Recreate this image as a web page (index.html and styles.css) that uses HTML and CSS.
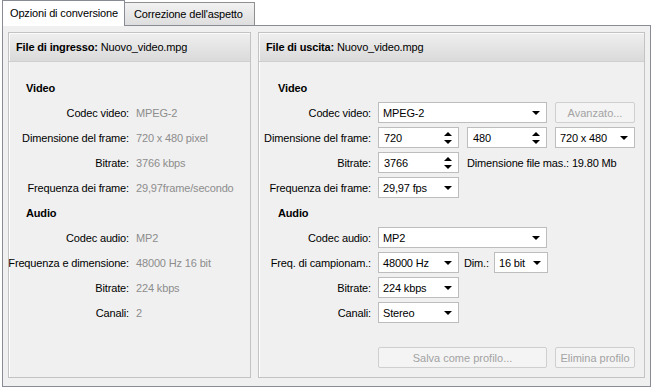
FILE: index.html
```html
<!DOCTYPE html>
<html lang="it">
<head>
<meta charset="utf-8">
<title>Opzioni di conversione</title>
<link rel="stylesheet" href="styles.css">
</head>
<body>
<div class="window">
  <div class="tabs">
    <div class="tab active">Opzioni di conversione</div>
    <div class="tab">Correzione dell'aspetto</div>
  </div>
  <div class="pane">
    <section class="group group-in">
      <header class="group-head"><b>File di ingresso:</b> Nuovo_video.mpg</header>
      <div class="info-grid">
        <div class="section">Video</div>
        <span class="lbl">Codec video:</span><span class="val">MPEG-2</span>
        <span class="lbl">Dimensione del frame:</span><span class="val">720 x 480 pixel</span>
        <span class="lbl">Bitrate:</span><span class="val">3766 kbps</span>
        <span class="lbl">Frequenza dei frame:</span><span class="val">29,97frame/secondo</span>
        <div class="section">Audio</div>
        <span class="lbl">Codec audio:</span><span class="val">MP2</span>
        <span class="lbl">Frequenza e dimensione:</span><span class="val">48000 Hz 16 bit</span>
        <span class="lbl">Bitrate:</span><span class="val">224 kbps</span>
        <span class="lbl">Canali:</span><span class="val">2</span>
      </div>
    </section>
    <section class="group group-out">
      <header class="group-head"><b>File di uscita:</b> Nuovo_video.mpg</header>
      <div class="form">
        <div class="section">Video</div>
        <div class="row">
          <span class="flbl">Codec video:</span>
          <div class="combo w-wide"><span>MPEG-2</span><i class="arrow"></i></div>
          <button class="btn w-std" disabled>Avanzato...</button>
        </div>
        <div class="row">
          <span class="flbl">Dimensione del frame:</span>
          <div class="spin w-std1"><span>720</span><i class="spin-arrows"><b class="up"></b><b class="down"></b></i></div>
          <div class="spin w-std"><span>480</span><i class="spin-arrows"><b class="up"></b><b class="down"></b></i></div>
          <div class="combo w-std"><span>720 x 480</span><i class="arrow"></i></div>
        </div>
        <div class="row">
          <span class="flbl">Bitrate:</span>
          <div class="spin w-std1"><span>3766</span><i class="spin-arrows"><b class="up"></b><b class="down"></b></i></div>
          <span class="note">Dimensione file mas.: 19.80 Mb</span>
        </div>
        <div class="row">
          <span class="flbl">Frequenza dei frame:</span>
          <div class="combo w-std1"><span>29,97 fps</span><i class="arrow"></i></div>
        </div>
        <div class="section">Audio</div>
        <div class="row">
          <span class="flbl">Codec audio:</span>
          <div class="combo w-wide"><span>MP2</span><i class="arrow"></i></div>
        </div>
        <div class="row">
          <span class="flbl">Freq. di campionam.:</span>
          <div class="combo w-std1"><span>48000 Hz</span><i class="arrow"></i></div>
          <span class="dim">Dim.:</span>
          <div class="combo w-small"><span>16 bit</span><i class="arrow"></i></div>
        </div>
        <div class="row">
          <span class="flbl">Bitrate:</span>
          <div class="combo w-std1"><span>224 kbps</span><i class="arrow"></i></div>
        </div>
        <div class="row">
          <span class="flbl">Canali:</span>
          <div class="combo w-std1"><span>Stereo</span><i class="arrow"></i></div>
        </div>
        <div class="buttons">
          <button class="btn w-wide" disabled>Salva come profilo...</button>
          <button class="btn w-std" disabled>Elimina profilo</button>
        </div>
      </div>
    </section>
  </div>
</div>
</body>
</html>
```

FILE: styles.css
```css
* { box-sizing: border-box; }

html, body {
  margin: 0;
  padding: 0;
  background: #ffffff;
}

body {
  font-family: "Liberation Sans", Arial, sans-serif;
  font-size: 11px;
  letter-spacing: -0.15px;
  color: #000;
  width: 653px;
  height: 387px;
  overflow: hidden;
}

.window {
  display: flex;
  flex-direction: column;
  height: 387px;
}

/* ---------- tabs ---------- */
.tabs {
  display: flex;
  align-items: flex-end;
  height: 25px;
  padding-left: 2px;
  flex: none;
}

.tab {
  height: 23px;
  padding: 0 9px;
  display: flex;
  align-items: center;
  border: 1px solid #8e8f8f;
  border-bottom: none;
  background: linear-gradient(#f2f2f2, #dedede);
  white-space: nowrap;
}

.tab.active {
  height: 26px;
  margin-bottom: -1px;
  padding: 0 7px 2px 7px;
  background: #ffffff;
  border-color: #898c95;
  position: relative;
  z-index: 1;
  width: 123px;
}

.tab + .tab {
  margin-left: -1px;
  width: 131px;
  padding-left: 9px;
}

/* ---------- pane ---------- */
.pane {
  flex: 1;
  margin: 0 2px 0 2px;
  width: 649px;
  border: 1px solid #898c95;
  background: #f0f0f0;
  padding: 6px 5px 8px 5px;
  display: flex;
  gap: 7px;
}

.group {
  border: 1px solid #c3c3c3;
  box-shadow: inset 1px 1px 0 #ffffff;
  background: #f0f0f0;
  display: flex;
  flex-direction: column;
}

.group-in { width: 243px; }
.group-out { width: 387px; }

.group-head {
  height: 29px;
  flex: none;
  padding: 0 7px;
  display: flex;
  align-items: center;
  gap: 3px;
  background: linear-gradient(#efefef, #dadada);
  border-bottom: 1px solid #cfcfcf;
  box-shadow: inset 1px 1px 0 #fafafa;
  white-space: nowrap;
}

.group-head b { font-weight: bold; }

.section {
  font-weight: bold;
  height: 25px;
  display: flex;
  align-items: center;
}

/* ---------- info grid (left) ---------- */
.info-grid {
  display: grid;
  grid-template-columns: 120px 1fr;
  grid-auto-rows: 25px;
  column-gap: 7px;
  align-items: center;
  padding-top: 13px;
}

.info-grid .section {
  grid-column: 1 / -1;
  padding-left: 17px;
}

.lbl {
  display: flex;
  justify-content: flex-end;
  white-space: nowrap;
  min-width: 0;
}

.val {
  color: #8d8d8d;
  white-space: nowrap;
}

/* ---------- form (right) ---------- */
.form {
  flex: 1;
  display: flex;
  flex-direction: column;
  padding: 13px 0 9px 0;
}

.form .section { padding-left: 19px; }

.row {
  height: 25px;
  display: flex;
  align-items: center;
  gap: 8px;
}

.flbl {
  width: 112px;
  margin-right: -1px;
  text-align: right;
  white-space: nowrap;
  flex: none;
}

.combo, .spin {
  height: 21px;
  background: #ffffff;
  border: 1px solid #bdbdbd;
  display: flex;
  align-items: center;
  justify-content: space-between;
  padding: 0 6px 0 4px;
  flex: none;
  white-space: nowrap;
}

.spin { padding-left: 5px; padding-right: 6px; }

.w-wide { width: 169px; }
.w-std1 { width: 81px; }
.w-std { width: 80px; }
.w-small { width: 54px; }

.arrow {
  width: 0;
  height: 0;
  border-left: 4px solid transparent;
  border-right: 4px solid transparent;
  border-top: 4px solid #000;
  margin-top: 1px;
}

.spin-arrows {
  display: flex;
  flex-direction: column;
  gap: 4px;
}

.spin-arrows .up,
.spin-arrows .down {
  width: 0;
  height: 0;
  border-left: 4px solid transparent;
  border-right: 4px solid transparent;
}

.spin-arrows .up { border-bottom: 4px solid #000; }
.spin-arrows .down { border-top: 4px solid #000; }

.note { white-space: nowrap; }

.dim { margin: 0 -3px; }

.btn {
  height: 21px;
  font: inherit;
  color: #a3a3a3;
  background: #f4f4f4;
  border: 1px solid #cfcfcf;
  border-radius: 2px;
  padding: 0;
  flex: none;
}

.buttons {
  margin-top: auto;
  display: flex;
  gap: 8px;
  padding-left: 119px;
}
```
